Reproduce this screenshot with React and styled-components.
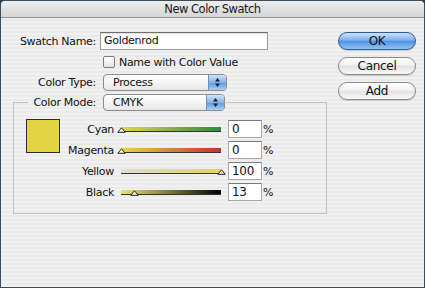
import React from "react";
import styled, { createGlobalStyle } from "styled-components";

const GlobalStyle = createGlobalStyle`
  html, body {
    margin: 0;
    padding: 0;
    background: #2f3c46;
  }
  #root {
    width: 425px;
    height: 288px;
  }
`;

const sliders = [
  { name: "Cyan", value: 0, from: "#e6d64a", to: "#2f8a3e" },
  { name: "Magenta", value: 0, from: "#e6d64a", to: "#c4302f" },
  { name: "Yellow", value: 100, from: "#dddddd", to: "#e6d64a" },
  { name: "Black", value: 13, from: "#efe27a", to: "#000000" },
];

const StepperArrows = () => (
  <svg width="7" height="11" viewBox="0 0 7 11">
    <path d="M3.5 1 L6 4.5 L1 4.5 Z" fill="#10203a" />
    <path d="M3.5 10 L6 6.5 L1 6.5 Z" fill="#10203a" />
  </svg>
);

const Thumb = () => (
  <svg width="9" height="6" viewBox="0 0 9 6">
    <path d="M4.5 0.8 L8.2 5.3 L0.8 5.3 Z" fill="#fbf7e0" stroke="#222" strokeWidth="1" />
  </svg>
);

const PopUp = ({ children, width }) => (
  <Select $width={width}>
    <SelectText>{children}</SelectText>
    <Stepper>
      <StepperArrows />
    </Stepper>
  </Select>
);

const App = () => {
  return (
    <>
      <GlobalStyle />
      <Window>
        <TitleBar>New Color Swatch</TitleBar>
        <Body>
          <Main>
            <FieldRow>
              <Label>Swatch Name:</Label>
              <TextField>Goldenrod</TextField>
            </FieldRow>
            <CheckRow>
              <CheckBox />
              <span>Name with Color Value</span>
            </CheckRow>
            <FieldRow $top={6}>
              <Label>Color Type:</Label>
              <PopUp width={124}>Process</PopUp>
            </FieldRow>
            <Group>
              <Legend>
                <Label $width={65}>Color Mode:</Label>
                <PopUp width={122}>CMYK</PopUp>
              </Legend>
              <GroupBody>
                <Swatch />
                <SliderGrid>
                  {sliders.map((s) => (
                    <React.Fragment key={s.name}>
                      <SliderLabel>{s.name}</SliderLabel>
                      <Track $from={s.from} $to={s.to}>
                        <ThumbWrap style={{ left: `${s.value}%` }}>
                          <Thumb />
                        </ThumbWrap>
                      </Track>
                      <NumberField>{s.value}</NumberField>
                      <Percent>%</Percent>
                    </React.Fragment>
                  ))}
                </SliderGrid>
              </GroupBody>
            </Group>
          </Main>
          <Buttons>
            <AquaButton $primary>OK</AquaButton>
            <AquaButton>Cancel</AquaButton>
            <AquaButton>Add</AquaButton>
          </Buttons>
        </Body>
      </Window>
    </>
  );
};

export default App;

const Window = styled.div`
  width: 425px;
  height: 288px;
  box-sizing: border-box;
  border: 1px solid #3e4d59;
  border-radius: 5px 5px 0 0;
  overflow: hidden;
  display: flex;
  flex-direction: column;
  font-family: "DejaVu Sans", "Liberation Sans", sans-serif;
  font-size: 11px;
  letter-spacing: -0.3px;
  color: #111;
  background: repeating-linear-gradient(
    to bottom,
    #f1f1f1 0px,
    #f1f1f1 2px,
    #eaeaea 2px,
    #eaeaea 4px
  );
`;

const TitleBar = styled.div`
  height: 16px;
  flex: none;
  border-bottom: 1px solid #8f8f8f;
  background: linear-gradient(to bottom, #eeeeee, #d6d6d6);
  display: flex;
  align-items: center;
  justify-content: center;
  font-size: 11.5px;
  letter-spacing: -0.5px;
  color: #1a1a1a;
`;

const Body = styled.div`
  display: flex;
  padding: 14px 0 0 12px;
`;

const Main = styled.div`
  width: 314px;
  display: flex;
  flex-direction: column;
`;

const FieldRow = styled.div`
  display: flex;
  align-items: center;
  gap: 4px;
  margin-top: ${(p) => p.$top || 0}px;
`;

const Label = styled.div`
  width: ${(p) => p.$width || 83}px;
  flex: none;
  display: flex;
  justify-content: flex-end;
  white-space: nowrap;
`;

const TextField = styled.div`
  width: 168px;
  height: 18px;
  box-sizing: border-box;
  background: #fff;
  border: 1px solid #9a9a9a;
  border-top-color: #6e6e6e;
  box-shadow: inset 0 1px 1px rgba(0, 0, 0, 0.12);
  padding: 0 3px;
  line-height: 16px;
`;

const CheckRow = styled.div`
  display: flex;
  align-items: center;
  gap: 4px;
  margin: 6px 0 0 90px;
  height: 12px;
`;

const CheckBox = styled.div`
  width: 12px;
  height: 12px;
  box-sizing: border-box;
  border: 1px solid #7d7d7d;
  border-radius: 2px;
  background: linear-gradient(to bottom, #ffffff, #e4e4e4);
`;

const Select = styled.div`
  width: ${(p) => p.$width}px;
  height: 17px;
  box-sizing: border-box;
  margin-left: 3px;
  display: flex;
  border: 1px solid #8c8c8c;
  border-radius: 4px;
  background: linear-gradient(to bottom, #ffffff, #f2f2f2 60%, #e6e6e6);
  overflow: hidden;
`;

const SelectText = styled.div`
  flex: 1;
  padding-left: 9px;
  line-height: 15px;
`;

const Stepper = styled.div`
  width: 17px;
  display: flex;
  align-items: center;
  justify-content: center;
  border-left: 1px solid #6f8fb8;
  background: linear-gradient(to bottom, #cfe3f8, #86b3e6 50%, #5d97db 51%, #a9d0f5);
`;

const Group = styled.fieldset`
  margin: 3px 0 0 0;
  padding: 0 0 12px 12px;
  width: 314px;
  box-sizing: border-box;
  border: 1px solid #c2c2c2;
  border-radius: 0;
  min-width: 0;
`;

const Legend = styled.legend`
  display: flex;
  align-items: center;
  margin-left: 2px;
  padding: 0 1px 0 3px;
  gap: 4px;
`;

const GroupBody = styled.div`
  display: flex;
  align-items: flex-start;
  gap: 4px;
  padding-top: 8px;
`;

const Swatch = styled.div`
  width: 34px;
  height: 34px;
  box-sizing: border-box;
  border: 1px solid #2b2b2b;
  background: #e4d444;
`;

const SliderGrid = styled.div`
  margin-top: 1px;
  display: grid;
  grid-template-columns: 50px 100px 34px auto;
  grid-auto-rows: 18px;
  row-gap: 3px;
  column-gap: 7px;
  align-items: center;
`;

const SliderLabel = styled.div`
  white-space: nowrap;
  display: flex;
  justify-content: flex-end;
`;

const Track = styled.div`
  position: relative;
  height: 4px;
  border-bottom: 1px solid #333;
  background: linear-gradient(to right, ${(p) => p.$from}, ${(p) => p.$to});
`;

const ThumbWrap = styled.div`
  position: absolute;
  top: 0px;
  width: 9px;
  height: 6px;
  margin-left: -4px;
  line-height: 0;
`;

const NumberField = styled.div`
  height: 18px;
  box-sizing: border-box;
  background: #fff;
  border: 1px solid #a8a8a8;
  border-top-color: #7a7a7a;
  padding: 0 3px;
  line-height: 16px;
  font-size: 12px;
`;

const Percent = styled.div`
  margin-left: -6px;
`;

const Buttons = styled.div`
  margin-left: 11px;
  width: 78px;
  display: flex;
  flex-direction: column;
  gap: 7px;
`;

const AquaButton = styled.div`
  height: 18px;
  box-sizing: border-box;
  border-radius: 9px;
  display: flex;
  align-items: center;
  justify-content: center;
  font-size: 12px;
  border: 1px solid ${(p) => (p.$primary ? "#2e5c96" : "#8a8a8a")};
  background: ${(p) =>
    p.$primary
      ? "linear-gradient(to bottom, #c9e2fa, #7fb3ea 45%, #4f92e0 50%, #8cc3f5 100%)"
      : "linear-gradient(to bottom, #ffffff, #f2f2f2 45%, #e2e2e2 50%, #f8f8f8 100%)"};
  box-shadow: 0 1px 1px rgba(0, 0, 0, 0.15);
  color: #111;
`;
